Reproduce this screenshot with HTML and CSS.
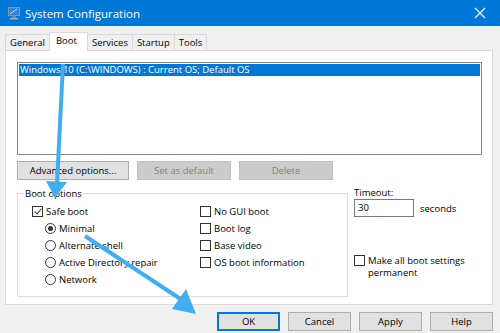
FILE: index.html
```html
<!DOCTYPE html>
<html lang="en">
<head>
    <meta charset="UTF-8">
    <title>System Configuration</title>
    <link rel="stylesheet" href="styles.css">
</head>
<body>
    <div class="window">
        <div class="titlebar">
            <svg class="app-icon" width="14" height="14" viewBox="0 0 14 14">
                <rect x="1" y="1" width="12" height="9" fill="#8a94a6"/>
                <rect x="2" y="2" width="10" height="7" fill="#3b7fd6"/>
                <path d="M3 8 L10 3" stroke="#bfe0ff" stroke-width="1"/>
                <rect x="5" y="10" width="4" height="2" fill="#7b8494"/>
                <rect x="3" y="12" width="8" height="1.5" fill="#a0a8b5"/>
            </svg>
            <span class="title">System Configuration</span>
            <svg class="close" width="12" height="12" viewBox="0 0 12 12">
                <path d="M1 1 L11 11 M11 1 L1 11" stroke="#fff" stroke-width="1.1"/>
            </svg>
        </div>

        <div class="content">
            <div class="tabs">
                <div class="tab">General</div>
                <div class="tab active">Boot</div>
                <div class="tab">Services</div>
                <div class="tab">Startup</div>
                <div class="tab">Tools</div>
            </div>

            <div class="panel">
                <div class="oslist">
                    <div class="os-item selected">Windows 10 (C:\WINDOWS) : Current OS; Default OS</div>
                </div>

                <div class="os-actions">
                    <button class="btn wide">Advanced options...</button>
                    <button class="btn wide" disabled>Set as default</button>
                    <button class="btn wide" disabled>Delete</button>
                </div>

                <div class="lower">
                    <fieldset class="group">
                        <legend>Boot options</legend>
                        <div class="opts">
                            <label class="opt"><span class="box checked"></span>Safe boot</label>
                            <label class="opt"><span class="box"></span>No GUI boot</label>
                            <label class="opt sub"><span class="radio on"></span>Minimal</label>
                            <label class="opt"><span class="box"></span>Boot log</label>
                            <label class="opt sub"><span class="radio"></span>Alternate shell</label>
                            <label class="opt"><span class="box"></span>Base video</label>
                            <label class="opt sub"><span class="radio"></span>Active Directory repair</label>
                            <label class="opt"><span class="box"></span>OS boot information</label>
                            <label class="opt sub"><span class="radio"></span>Network</label>
                        </div>
                    </fieldset>

                    <div class="side">
                        <div class="side-label">Timeout:</div>
                        <div class="timeout-row">
                            <div class="textbox">30</div>
                            <span>seconds</span>
                        </div>
                        <label class="permanent"><span class="box"></span><span>Make all boot settings<br>permanent</span></label>
                    </div>
                </div>
            </div>

            <div class="footer">
                <button class="btn focus">OK</button>
                <button class="btn">Cancel</button>
                <button class="btn">Apply</button>
                <button class="btn">Help</button>
            </div>
        </div>

        <svg class="arrows" width="500" height="333" viewBox="0 0 500 333">
            <g fill="#42aef0" stroke="#42aef0">
                <path d="M63 64 L57 184" stroke-width="4" fill="none"/>
                <path d="M46 181 L67 182 L55 198 Z" stroke="none"/>
                <path d="M85 236 L182 300" stroke-width="4" fill="none"/>
                <path d="M172 309 L186 289 L196 314 Z" stroke="none"/>
            </g>
        </svg>
    </div>
</body>
</html>
```

FILE: styles.css
```css
body {
    margin: 0;
    font-family: "Open Sans", "Noto Sans", sans-serif;
    font-size: 9.5px;
    color: #000;
    background-color: #f0f0f0;
}

.window {
    position: relative;
    width: 500px;
    height: 333px;
    overflow: hidden;
    background-color: #f0f0f0;
}

.titlebar {
    height: 26px;
    background-color: #0078d7;
    display: flex;
    align-items: center;
    padding: 0 14px 0 7px;
    color: white;
    box-sizing: border-box;
}

.app-icon {
    margin-right: 4px;
}

.title {
    font-size: 11.5px;
    flex: 1;
}

.content {
    padding: 6px 7px 0 5px;
}

.tabs {
    display: flex;
    align-items: flex-end;
    height: 18px;
}

.tab {
    height: 16px;
    line-height: 16px;
    padding: 0 4px;
    border: 1px solid #d9d9d9;
    border-bottom: none;
    margin-left: -1px;
    box-sizing: border-box;
}

.tab:first-child {
    margin-left: 0;
}

.tab.active {
    height: 19px;
    background-color: white;
    padding: 0 10px 0 6px;
    margin-bottom: -1px;
    position: relative;
    z-index: 1;
}

.panel {
    background-color: white;
    border: 1px solid #d9d9d9;
    height: 255px;
    box-sizing: border-box;
    padding: 11px 10px 0 11px;
}

.oslist {
    height: 93px;
    border: 1px solid #828790;
    box-sizing: border-box;
    padding: 1px;
}

.os-item {
    height: 12px;
    line-height: 12px;
    padding-left: 1px;
}

.os-item.selected {
    background-color: #0078d7;
    color: white;
}

.os-actions {
    display: flex;
    gap: 8px;
    margin-top: 6px;
}

.btn {
    font-family: inherit;
    font-size: 9.5px;
    height: 19px;
    width: 63px;
    padding: 0;
    background-color: #e1e1e1;
    border: 1px solid #adadad;
    color: #000;
}

.btn.wide {
    width: 112px;
}

.os-actions .btn + .btn {
    width: 94px;
}

.btn:disabled {
    background-color: #cccccc;
    border-color: #bfbfbf;
    color: #838383;
}

.btn.focus {
    border: 2px solid #0078d7;
}

.lower {
    display: flex;
    margin-top: 7px;
}

.group {
    width: 331px;
    height: 110px;
    box-sizing: border-box;
    border: 1px solid #dcdcdc;
    margin: 0;
    padding: 3px 0 0 6px;
}

.group legend {
    padding: 0 1px;
}

.opts {
    display: grid;
    grid-template-columns: 168px auto;
    grid-auto-rows: 17px;
    padding-left: 8px;
}

.opt {
    display: flex;
    align-items: center;
    gap: 3px;
}

.opt.sub {
    grid-column: 1;
    padding-left: 13px;
}

.box {
    width: 11px;
    height: 11px;
    border: 1px solid #333;
    box-sizing: border-box;
    background-color: white;
    position: relative;
    flex: none;
}

.box.checked::after {
    content: "";
    position: absolute;
    left: 3px;
    top: 0;
    width: 3px;
    height: 6px;
    border: solid #333;
    border-width: 0 1px 1px 0;
    transform: rotate(40deg);
}

.radio {
    width: 11px;
    height: 11px;
    border: 1px solid #333;
    border-radius: 50%;
    box-sizing: border-box;
    position: relative;
    flex: none;
}

.radio.on::after {
    content: "";
    position: absolute;
    left: 2px;
    top: 2px;
    width: 5px;
    height: 5px;
    border-radius: 50%;
    background-color: #333;
}

.side {
    margin-left: 6px;
    margin-top: -1px;
}

.side-label {
    height: 13px;
}

.timeout-row {
    display: flex;
    align-items: center;
    gap: 6px;
}

.textbox {
    width: 60px;
    height: 18px;
    line-height: 16px;
    border: 1px solid #7a7a7a;
    box-sizing: border-box;
    padding-left: 3px;
}

.permanent {
    display: flex;
    gap: 3px;
    margin-top: 38px;
    line-height: 12px;
}

.footer {
    display: flex;
    justify-content: flex-end;
    gap: 8px;
    margin-top: 7px;
}

.arrows {
    position: absolute;
    left: 0;
    top: 0;
    pointer-events: none;
}
```
